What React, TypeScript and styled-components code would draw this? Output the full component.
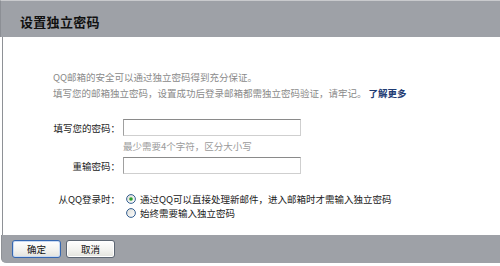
import React from "react";
import styled, { createGlobalStyle } from "styled-components";

const Global = createGlobalStyle`
  html, body { margin: 0; padding: 0; background: #fff; }
  body { font-family: "Noto Sans CJK SC", "Noto Sans", sans-serif; }
  * { box-sizing: border-box; }
`;

const Frame = styled.div`
  width: 500px;
  height: 266px;
  display: flex;
  flex-direction: column;
  background: #fff;
  overflow: hidden;
`;

const Header = styled.div`
  height: 37px;
  background: #9ea1a7;
  border-top: 1px solid #c9cacd;
  border-left: 1px solid #8c8f95;
  padding: 4px 0 0 19px;
  display: flex;
  align-items: center;
`;

const Title = styled.h1`
  margin: 0;
  font-size: 13px;
  font-weight: 700;
  color: #111;
  letter-spacing: 0.3px;
`;

const Body = styled.div`
  height: 198px;
  margin-left: 2px;
  border-left: 1px solid #8e9196;
  padding: 32px 0 0 0;
  display: flex;
  flex-direction: column;
`;

const Intro = styled.div`
  padding-left: 50px;
  font-size: 9.5px;
  line-height: 16px;
  color: #8a8a8a;
`;

const Link = styled.a`
  color: #1e3b73;
  font-weight: 700;
  text-decoration: none;
  margin-left: 2px;
`;

const Form = styled.div`
  margin-top: 18px;
  display: grid;
  grid-template-columns: 117px 1fr;
  column-gap: 0;
  align-items: center;
`;

const Label = styled.label<{ $top?: boolean }>`
  justify-self: end;
  align-self: ${(p) => (p.$top ? "start" : "center")};
  font-size: 9.5px;
  line-height: 14px;
  color: #222;
  white-space: nowrap;
`;

const Input = styled.input`
  width: 178px;
  height: 17px;
  margin: 0 0 0 3px;
  padding: 0 2px;
  border: 1px solid;
  border-color: #8a8a8a #cfcfcf #cfcfcf #a0a0a0;
  background: #fff;
  font-size: 10px;
  outline: none;
`;

const Hint = styled.div`
  grid-column: 2;
  height: 21px;
  line-height: 21px;
  padding-left: 3px;
  font-size: 9.5px;
  color: #9a9a9a;
`;

const Spacer = styled.div`
  grid-column: 1 / 3;
  height: 18px;
`;

const RadioGroup = styled.div`
  display: flex;
  flex-direction: column;
  padding-left: 6px;
`;

const RadioRow = styled.div`
  display: flex;
  align-items: center;
  height: 14px;
  font-size: 9.5px;
  color: #222;
  white-space: nowrap;
`;

const RadioIcon = styled.svg`
  width: 10px;
  height: 10px;
  margin-right: 4px;
  flex: none;
`;

const Footer = styled.div`
  height: 28px;
  margin-left: 1px;
  background: #9ea1a7;
  border-bottom-left-radius: 5px;
  border-left: 1px solid #8e9196;
  padding: 5px 0 0 10px;
  display: flex;
  gap: 5px;
`;

const Button = styled.button<{ $primary?: boolean }>`
  width: 49px;
  height: 18px;
  padding: 0;
  border-radius: 3px;
  border: 1px solid ${(p) => (p.$primary ? "#3567b0" : "#5d6673")};
  background: linear-gradient(#ffffff, #f1f1ee 60%, #e3e3dd);
  box-shadow: inset 0 0 0 1px ${(p) => (p.$primary ? "#c9daf3" : "#ffffff")};
  font-family: "Noto Sans CJK SC", sans-serif;
  font-size: 9.5px;
  line-height: 16px;
  color: #111;
`;

const Radio = ({ checked }: { checked?: boolean }) => (
  <RadioIcon viewBox="0 0 10 10">
    <defs>
      <linearGradient id="rg" x1="0" y1="0" x2="1" y2="1">
        <stop offset="0" stopColor="#dcdcd6" />
        <stop offset="1" stopColor="#ffffff" />
      </linearGradient>
    </defs>
    <circle cx="5" cy="5" r="4.4" fill="url(#rg)" stroke="#1f4f87" strokeWidth="0.9" />
    {checked && <circle cx="5" cy="5" r="1.8" fill="#2aa02a" />}
  </RadioIcon>
);

export default function App() {
  return (
    <>
      <Global />
      <Frame>
        <Header>
          <Title>设置独立密码</Title>
        </Header>
        <Body>
          <Intro>
            <div>QQ邮箱的安全可以通过独立密码得到充分保证。</div>
            <div>
              填写您的邮箱独立密码，设置成功后登录邮箱都需独立密码验证，请牢记。
              <Link href="#">了解更多</Link>
            </div>
          </Intro>
          <Form>
            <Label>填写您的密码：</Label>
            <Input type="password" />
            <Hint>最少需要4个字符，区分大小写</Hint>
            <Label>重输密码：</Label>
            <Input type="password" />
            <Spacer />
            <Label $top>从QQ登录时：</Label>
            <RadioGroup>
              <RadioRow>
                <Radio checked />
                通过QQ可以直接处理新邮件，进入邮箱时才需输入独立密码
              </RadioRow>
              <RadioRow>
                <Radio />
                始终需要输入独立密码
              </RadioRow>
            </RadioGroup>
          </Form>
        </Body>
        <Footer>
          <Button $primary>确定</Button>
          <Button>取消</Button>
        </Footer>
      </Frame>
    </>
  );
}
